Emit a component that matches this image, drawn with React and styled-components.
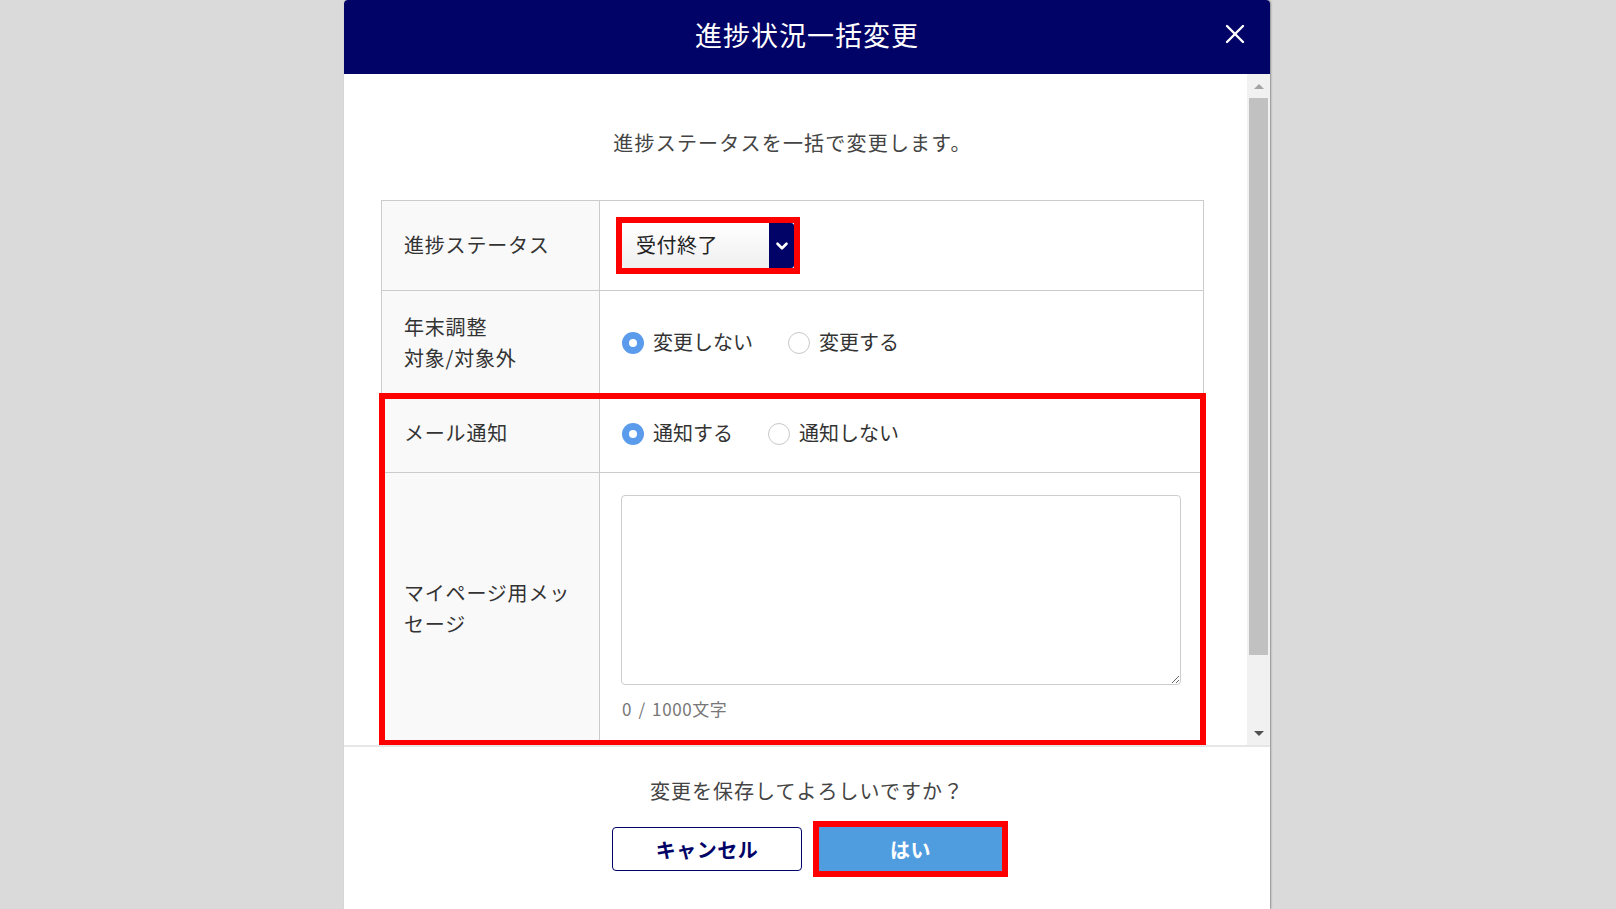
import styled, { createGlobalStyle } from 'styled-components';
import { X, ChevronDown } from 'lucide-react';

const GlobalStyle = createGlobalStyle`
  html, body {
    margin: 0;
    padding: 0;
    background: #dadada;
    overflow: hidden;
  }
  body {
    font-family: 'Noto Sans CJK JP', 'Noto Sans', sans-serif;
    color: #333;
  }
`;

const colors = {
  navy: '#020366',
  blue: '#5b9bec',
  line: '#cccccc',
  label: '#f9f9f9',
  red: '#ff0000',
};

const App = () => {
  return (
    <>
      <GlobalStyle />
      <Modal>
        <Header>
          <Title>進捗状況一括変更</Title>
          <CloseButton aria-label="close">
            <X size={32} strokeWidth={1.8} />
          </CloseButton>
        </Header>

        <Body>
          <ScrollArea>
            <Intro>進捗ステータスを一括で変更します。</Intro>
            <Table>
              <Row>
                <Label>進捗ステータス</Label>
                <Value>
                  <Annotated>
                    <Select>
                      <span>受付終了</span>
                      <SelectArrow>
                        <ChevronDown size={18} strokeWidth={3.5} />
                      </SelectArrow>
                    </Select>
                  </Annotated>
                </Value>
              </Row>
              <Row>
                <Label>
                  年末調整
                  <br />
                  対象/対象外
                </Label>
                <Value>
                  <RadioGroup>
                    <Radio checked>変更しない</Radio>
                    <Radio>変更する</Radio>
                  </RadioGroup>
                </Value>
              </Row>
              <Highlight>
                <Row>
                  <Label>メール通知</Label>
                  <Value>
                    <RadioGroup>
                      <Radio checked>通知する</Radio>
                      <Radio>通知しない</Radio>
                    </RadioGroup>
                  </Value>
                </Row>
                <Row>
                  <Label>マイページ用メッセージ</Label>
                  <Value $column>
                    <TextArea />
                    <Counter>0 / 1000文字</Counter>
                  </Value>
                </Row>
              </Highlight>
            </Table>
          </ScrollArea>
          <ScrollBar>
            <ScrollButton>
              <Arrow $dir="up" />
            </ScrollButton>
            <ScrollTrack>
              <ScrollThumb />
            </ScrollTrack>
            <ScrollButton>
              <Arrow $dir="down" />
            </ScrollButton>
          </ScrollBar>
        </Body>

        <Footer>
          <Question>変更を保存してよろしいですか？</Question>
          <ButtonRow>
            <Button>キャンセル</Button>
            <Annotated>
              <Button $primary>はい</Button>
            </Annotated>
          </ButtonRow>
        </Footer>
      </Modal>
    </>
  );
};

const Radio = ({ checked, children }) => (
  <RadioLabel>
    <RadioCircle $checked={checked} />
    {children}
  </RadioLabel>
);

export default App;

const Modal = styled.div`
  width: 926px;
  height: 909px;
  margin-left: 344px;
  background: #fff;
  display: flex;
  flex-direction: column;
  border-radius: 4px 4px 0 0;
  box-shadow: 1px 0 2px rgba(0, 0, 0, 0.35);
`;

const Header = styled.header`
  position: relative;
  height: 74px;
  box-sizing: border-box;
  padding-bottom: 5px;
  flex-shrink: 0;
  background: ${colors.navy};
  border-radius: 4px 4px 0 0;
  display: flex;
  align-items: center;
  justify-content: center;
`;

const Title = styled.h1`
  margin: 0;
  color: #fff;
  font-size: 27px;
  font-weight: 400;
  line-height: 1;
  letter-spacing: 1px;
`;

const CloseButton = styled.button`
  position: absolute;
  right: 19px;
  top: 18px;
  width: 32px;
  height: 32px;
  padding: 0;
  border: none;
  background: transparent;
  color: #fff;
  display: flex;
  cursor: pointer;
`;

const Body = styled.div`
  height: 673px;
  flex-shrink: 0;
  display: flex;
  border-bottom: 2px solid #e6e6e6;
  box-sizing: border-box;
`;

const ScrollArea = styled.div`
  flex: 1;
  overflow: hidden;
  padding: 54px 43px 0 37px;
`;

const Intro = styled.p`
  margin: 0 0 42px;
  text-align: center;
  font-size: 20px;
  line-height: 30px;
  letter-spacing: 1.2px;
  color: #444;
`;

const Table = styled.div`
  border: 1px solid ${colors.line};
`;

const Row = styled.div`
  display: grid;
  grid-template-columns: 218px 1fr;
  & + & {
    border-top: 1px solid ${colors.line};
  }
`;

const Highlight = styled.div`
  position: relative;
  border-top: 1px solid ${colors.line};
  &::after {
    content: '';
    position: absolute;
    top: -2px;
    left: -3px;
    right: -3px;
    bottom: -2px;
    border: 6px solid ${colors.red};
    pointer-events: none;
  }
`;

const Label = styled.div`
  box-sizing: border-box;
  padding: 21px 22px;
  background: ${colors.label};
  border-right: 1px solid ${colors.line};
  display: flex;
  flex-direction: column;
  justify-content: center;
  font-size: 20px;
  line-height: 30.5px;
  letter-spacing: 0.8px;
  color: #333;
`;

const Value = styled.div`
  padding: 22px;
  display: flex;
  flex-direction: ${(p) => (p.$column ? 'column' : 'row')};
  align-items: ${(p) => (p.$column ? 'stretch' : 'center')};
`;

const Annotated = styled.div`
  position: relative;
  display: inline-flex;
  &::after {
    content: '';
    position: absolute;
    inset: -6px;
    border: 6px solid ${colors.red};
    pointer-events: none;
  }
`;

const Select = styled.div`
  width: 172px;
  height: 45px;
  box-sizing: border-box;
  display: flex;
  align-items: center;
  justify-content: space-between;
  padding-left: 14px;
  padding-bottom: 2px;
  background: linear-gradient(#ffffff, #efefef);
  border-radius: 3px;
  font-size: 20px;
  color: #222;
  overflow: hidden;
  span:first-child {
    letter-spacing: 0.5px;
  }
`;

const SelectArrow = styled.span`
  width: 25px;
  height: 45px;
  margin-bottom: -2px;
  background: ${colors.navy};
  color: #fff;
  display: flex;
  align-items: center;
  justify-content: center;
`;

const RadioGroup = styled.div`
  display: flex;
  align-items: center;
  gap: 35px;
`;

const RadioLabel = styled.label`
  display: flex;
  align-items: center;
  gap: 9px;
  font-size: 20px;
  line-height: 31px;
  color: #333;
  padding-bottom: 2px;
`;

const RadioCircle = styled.span`
  width: 22px;
  height: 22px;
  box-sizing: border-box;
  border-radius: 50%;
  position: relative;
  margin-top: 2px;
  background: ${(p) => (p.$checked ? colors.blue : '#fff')};
  border: ${(p) => (p.$checked ? 'none' : '1.5px solid #c8c8c8')};
  &::after {
    content: '';
    display: ${(p) => (p.$checked ? 'block' : 'none')};
    position: absolute;
    top: 7px;
    left: 7px;
    width: 8px;
    height: 8px;
    border-radius: 50%;
    background: #fff;
  }
`;

const TextArea = styled.textarea`
  display: block;
  height: 190px;
  box-sizing: border-box;
  margin-left: -1px;
  border: 1px solid #cdcdcd;
  border-radius: 4px;
  resize: vertical;
  font-family: inherit;
`;

const Counter = styled.div`
  margin-top: 11px;
  font-size: 17px;
  line-height: 26px;
  letter-spacing: 0.6px;
  word-spacing: 2px;
  color: #777;
`;

const ScrollBar = styled.div`
  width: 23px;
  background: #f1f1f1;
  display: flex;
  flex-direction: column;
`;

const ScrollButton = styled.div`
  height: 24px;
  display: flex;
  align-items: center;
  justify-content: center;
`;

const Arrow = styled.span`
  width: 0;
  height: 0;
  border-left: 5px solid transparent;
  border-right: 5px solid transparent;
  ${(p) =>
    p.$dir === 'up'
      ? 'border-bottom: 5px solid #a3a3a3;'
      : 'border-top: 5px solid #505050;'}
`;

const ScrollTrack = styled.div`
  flex: 1;
  padding: 0 2px;
`;

const ScrollThumb = styled.div`
  height: 557px;
  background: #c1c1c1;
`;

const Footer = styled.footer`
  flex: 1;
  padding-top: 29px;
  display: flex;
  flex-direction: column;
  align-items: center;
`;

const Question = styled.p`
  margin: 0 0 21px;
  font-size: 20px;
  line-height: 30px;
  letter-spacing: 1px;
  color: #444;
`;

const ButtonRow = styled.div`
  display: flex;
  gap: 17px;
`;

const Button = styled.button`
  width: ${(p) => (p.$primary ? '183px' : '190px')};
  height: 44px;
  box-sizing: border-box;
  border-radius: ${(p) => (p.$primary ? '0' : '4px')};
  border: ${(p) => (p.$primary ? 'none' : `1.5px solid ${colors.navy}`)};
  background: ${(p) => (p.$primary ? '#4f9ddf' : '#fff')};
  color: ${(p) => (p.$primary ? '#fff' : colors.navy)};
  font-family: inherit;
  font-size: 20px;
  font-weight: 700;
  letter-spacing: 0.5px;
  cursor: pointer;
`;
